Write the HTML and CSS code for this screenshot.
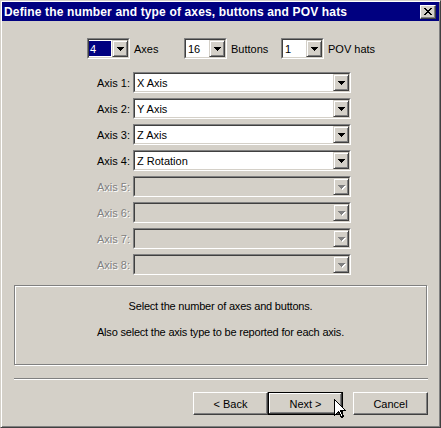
FILE: index.html
```html
<!DOCTYPE html>
<html>
<head>
<meta charset="utf-8">
<link rel="stylesheet" href="styles.css">
</head>
<body>
<div class="window">
  <div class="titlebar">
    <span class="title">Define the number and type of axes, buttons and POV hats</span>
    <span class="close"><svg width="8" height="7" shape-rendering="crispEdges"><path d="M0 0h2v1H0zM6 0h2v1H6zM1 1h2v1H1zM5 1h2v1H5zM2 2h4v1H2zM3 3h2v1H3zM2 4h4v1H2zM1 5h2v1H1zM5 5h2v1H5zM0 6h2v1H0zM6 6h2v1H6z" fill="#000"/></svg></span>
  </div>

  <div class="counts">
    <div class="group">
      <div class="combo small"><div class="inner"><div class="field"><span class="sel">4</span></div><span class="drop"><svg width="7" height="4" shape-rendering="crispEdges"><path d="M0 0h7v1H0zM1 1h5v1H1zM2 2h3v1H2zM3 3h1v1H3z"/></svg></span></div></div>
      <span>Axes</span>
    </div>
    <div class="group">
      <div class="combo small"><div class="inner"><div class="field"><span class="val">16</span></div><span class="drop"><svg width="7" height="4" shape-rendering="crispEdges"><path d="M0 0h7v1H0zM1 1h5v1H1zM2 2h3v1H2zM3 3h1v1H3z"/></svg></span></div></div>
      <span>Buttons</span>
    </div>
    <div class="group">
      <div class="combo small"><div class="inner"><div class="field"><span class="val">1</span></div><span class="drop"><svg width="7" height="4" shape-rendering="crispEdges"><path d="M0 0h7v1H0zM1 1h5v1H1zM2 2h3v1H2zM3 3h1v1H3z"/></svg></span></div></div>
      <span>POV hats</span>
    </div>
  </div>

  <div class="axes">
    <span class="lbl">Axis 1:</span>
    <div class="combo"><div class="inner"><div class="field"><span class="val">X Axis</span></div><span class="drop"><svg width="7" height="4" shape-rendering="crispEdges"><path d="M0 0h7v1H0zM1 1h5v1H1zM2 2h3v1H2zM3 3h1v1H3z"/></svg></span></div></div>
    <span class="lbl">Axis 2:</span>
    <div class="combo"><div class="inner"><div class="field"><span class="val">Y Axis</span></div><span class="drop"><svg width="7" height="4" shape-rendering="crispEdges"><path d="M0 0h7v1H0zM1 1h5v1H1zM2 2h3v1H2zM3 3h1v1H3z"/></svg></span></div></div>
    <span class="lbl">Axis 3:</span>
    <div class="combo"><div class="inner"><div class="field"><span class="val">Z Axis</span></div><span class="drop"><svg width="7" height="4" shape-rendering="crispEdges"><path d="M0 0h7v1H0zM1 1h5v1H1zM2 2h3v1H2zM3 3h1v1H3z"/></svg></span></div></div>
    <span class="lbl">Axis 4:</span>
    <div class="combo"><div class="inner"><div class="field"><span class="val">Z Rotation</span></div><span class="drop"><svg width="7" height="4" shape-rendering="crispEdges"><path d="M0 0h7v1H0zM1 1h5v1H1zM2 2h3v1H2zM3 3h1v1H3z"/></svg></span></div></div>
    <span class="lbl disabled">Axis 5:</span>
    <div class="combo disabled"><div class="inner"><div class="field"></div><span class="drop"><svg width="8" height="5" shape-rendering="crispEdges"><path d="M1 1h7v1H1zM2 2h5v1H2zM3 3h3v1H3zM4 4h1v1H4z" fill="#fff"/><path d="M0 0h7v1H0zM1 1h5v1H1zM2 2h3v1H2zM3 3h1v1H3z" fill="#808080"/></svg></span></div></div>
    <span class="lbl disabled">Axis 6:</span>
    <div class="combo disabled"><div class="inner"><div class="field"></div><span class="drop"><svg width="8" height="5" shape-rendering="crispEdges"><path d="M1 1h7v1H1zM2 2h5v1H2zM3 3h3v1H3zM4 4h1v1H4z" fill="#fff"/><path d="M0 0h7v1H0zM1 1h5v1H1zM2 2h3v1H2zM3 3h1v1H3z" fill="#808080"/></svg></span></div></div>
    <span class="lbl disabled">Axis 7:</span>
    <div class="combo disabled"><div class="inner"><div class="field"></div><span class="drop"><svg width="8" height="5" shape-rendering="crispEdges"><path d="M1 1h7v1H1zM2 2h5v1H2zM3 3h3v1H3zM4 4h1v1H4z" fill="#fff"/><path d="M0 0h7v1H0zM1 1h5v1H1zM2 2h3v1H2zM3 3h1v1H3z" fill="#808080"/></svg></span></div></div>
    <span class="lbl disabled">Axis 8:</span>
    <div class="combo disabled"><div class="inner"><div class="field"></div><span class="drop"><svg width="8" height="5" shape-rendering="crispEdges"><path d="M1 1h7v1H1zM2 2h5v1H2zM3 3h3v1H3zM4 4h1v1H4z" fill="#fff"/><path d="M0 0h7v1H0zM1 1h5v1H1zM2 2h3v1H2zM3 3h1v1H3z" fill="#808080"/></svg></span></div></div>
  </div>

  <div class="info">
    <p>Select the number of axes and buttons.</p>
    <p>Also select the axis type to be reported for each axis.</p>
  </div>

  <div class="sep"></div>

  <div class="buttons">
    <span class="btn">&lt; Back</span>
    <span class="btn default">Next &gt;</span>
    <span class="btn cancel">Cancel</span>
  </div>

  <svg class="cursor" width="12" height="19" viewBox="0 0 12 19" shape-rendering="crispEdges"><path d="M0.5 0.5V16.5L4.5 12.5L7.5 18.5L9.5 17.5L6.5 11.5H11.5Z" fill="#fff" stroke="#000" stroke-width="1"/></svg>
</div>
</body>
</html>
```
FILE: styles.css
```css
* { box-sizing: border-box; }

body {
  margin: 0;
  background: #d4d0c8;
  font-family: "Liberation Sans", Arial, sans-serif;
  font-size: 11px;
  color: #000;
}

.window {
  position: relative;
  width: 441px;
  height: 428px;
  background: #d4d0c8;
  border: 1px solid;
  border-color: #d4d0c8 #404040 #404040 #d4d0c8;
  padding: 1px;
  box-shadow: inset 1px 1px #fff, inset -1px -1px #808080;
  display: flex;
  flex-direction: column;
}

.titlebar {
  height: 19px;
  background: #000080;
  display: flex;
  align-items: center;
  padding: 0 3px 0 2px;
}

.title {
  color: #fff;
  font-weight: bold;
  font-size: 12px;
  letter-spacing: 0.15px;
}

.close {
  margin-left: auto;
  width: 16px;
  height: 14px;
  background: #d4d0c8;
  border: 1px solid;
  border-color: #fff #404040 #404040 #fff;
  box-shadow: inset -1px -1px #808080;
  display: flex;
  align-items: center;
  justify-content: center;
}

.counts {
  margin-top: 17px;
  padding-left: 85px;
  display: grid;
  grid-template-columns: 97px 97px auto;
  height: 21px;
}

.group {
  display: flex;
  align-items: center;
  gap: 4px;
}

.combo {
  display: flex;
  width: 218px;
  height: 21px;
  border: 1px solid;
  border-color: #808080 #fff #fff #808080;
}

.combo.small { width: 43px; }

.combo .inner {
  flex: 1;
  display: flex;
  border: 1px solid;
  border-color: #404040 #d4d0c8 #d4d0c8 #404040;
}

.field {
  flex: 1;
  background: #fff;
  display: flex;
  align-items: center;
}

.combo.disabled .field { background: #d4d0c8; }

.val { padding-left: 2px; }

.sel {
  align-self: stretch;
  flex: 1;
  margin: 1px 1px 1px 0;
  padding-left: 1px;
  background: #000080;
  color: #fff;
  display: flex;
  align-items: center;
}

.drop {
  width: 16px;
  background: #d4d0c8;
  border: 1px solid;
  border-color: #d4d0c8 #404040 #404040 #d4d0c8;
  box-shadow: inset 1px 1px #fff, inset -1px -1px #808080;
  display: flex;
  align-items: center;
  justify-content: center;
}

.combo.disabled .drop svg { margin-left: 1px; margin-top: 1px; }

.axes {
  margin-top: 13px;
  display: grid;
  grid-template-columns: 128px 218px;
  grid-auto-rows: 21px;
  column-gap: 3px;
  row-gap: 5px;
  align-items: center;
}

.lbl { text-align: right; }

.lbl.disabled {
  color: #808080;
  text-shadow: 1px 1px 0 #fff;
}

.info {
  margin: 10px 0 0 12px;
  width: 413px;
  height: 80px;
  border: 1px solid #808080;
  box-shadow: 1px 1px 0 #fff, inset 1px 1px 0 #fff;
  padding-top: 14px;
  display: flex;
  flex-direction: column;
  align-items: center;
  gap: 13px;
  letter-spacing: -0.2px;
}

.info p {
  margin: 0;
  line-height: 13px;
}

.sep {
  margin: 13px 0 0 12px;
  width: 414px;
  height: 2px;
  border-top: 1px solid #808080;
  border-bottom: 1px solid #fff;
}

.buttons {
  margin-top: 12px;
  padding-right: 11px;
  display: flex;
  justify-content: flex-end;
}

.btn {
  width: 75px;
  height: 23px;
  display: flex;
  align-items: center;
  justify-content: center;
  border: 1px solid;
  border-color: #fff #404040 #404040 #fff;
  box-shadow: inset -1px -1px #808080;
}

.btn.default {
  border: 1px solid #000;
  box-shadow: inset -1px -1px #404040, inset 1px 1px #fff, inset -2px -2px #808080;
}

.btn.cancel { margin-left: 10px; }

.cursor {
  position: absolute;
  left: 333px;
  top: 398px;
}
```
